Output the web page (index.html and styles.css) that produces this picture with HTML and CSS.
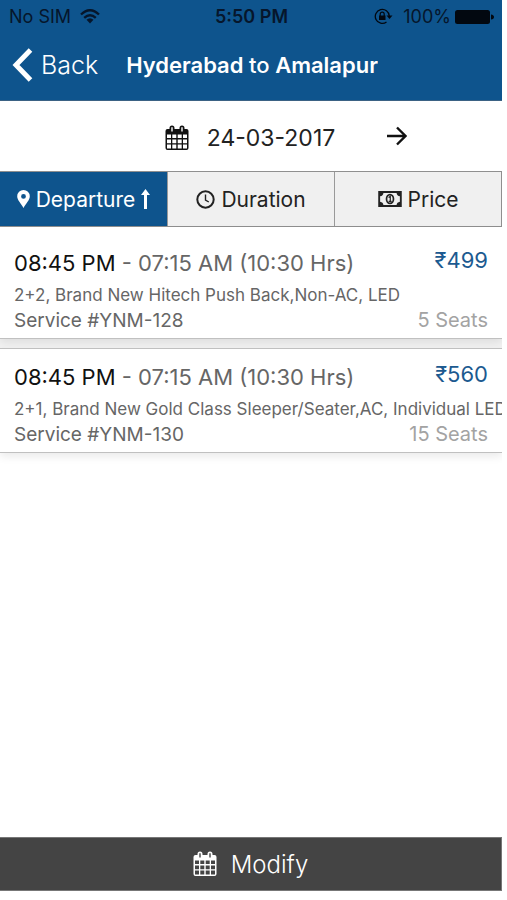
FILE: index.html
```html
<!DOCTYPE html>
<html lang="en">
<head>
<meta charset="utf-8">
<meta name="viewport" content="width=device-width, initial-scale=1">
<title>Hyderabad to Amalapuram</title>
<link rel="stylesheet" href="styles.css">
</head>
<body>
<svg class="defs" aria-hidden="true">
  <symbol id="calendar" viewBox="0 0 24 26">
    <path fill="currentColor" fill-rule="evenodd" d="M2.500 4H4.500V3Q4.500 0.500 7 0.500T9.500 3V4H14.500V3Q14.500 0.500 17 0.500T19.500 3V4H21.500Q23.500 4 23.500 6V23Q23.500 25 21.500 25H2.500Q0.500 25 0.500 23V6Q0.500 4 2.500 4ZM6.300 3V6.500H7.700V3Q7.700 2 7 2T6.300 3ZM16.300 3V6.500H17.700V3Q17.700 2 17 2T16.300 3ZM2 9.500V13H6V9.500ZM7.300 9.500V13H11.300V9.500ZM12.700 9.500V13H16.700V9.500ZM18 9.500V13H22V9.500ZM2 14.400V18.200H6V14.400ZM7.300 14.400V18.200H11.300V14.400ZM12.700 14.400V18.200H16.700V14.400ZM18 14.400V18.200H22V14.400ZM2 19.600V23.500H6V19.600ZM7.300 19.600V23.500H11.300V19.600ZM12.700 19.600V23.500H16.700V19.600ZM18 19.600V23.500H22V19.600Z"/>
  </symbol>
</svg>
<div class="app">
  <header class="top">
    <div class="status">
      <span class="carrier">No SIM
        <svg width="20" height="15" viewBox="0 0 20 15" fill="none" stroke="currentColor" stroke-width="2.400"><path d="M1 5.500Q10-3 19 5.500M4.200 8.800Q10 3.500 15.800 8.800"/><path d="M6.500 10.800Q10 7.800 13.500 10.800L10 14.500Z" fill="currentColor" stroke="none"/></svg>
      </span>
      <span class="clock">5:50 PM</span>
      <span class="battery">
        <svg width="19" height="17" viewBox="0 0 19 17"><path d="M12.500 14A7 7 0 1 1 15.300 8" fill="none" stroke="currentColor" stroke-width="1.300"/><path d="M12.500 7.500H18.500L15.500 11Z" fill="currentColor"/><path d="M5 7.500H11.500V12H5Z" fill="currentColor"/><path d="M6.200 8V6.200a2 2 0 0 1 4 0V8" fill="none" stroke="currentColor" stroke-width="1.200"/></svg>
        <span class="level">100%</span>
        <svg width="39" height="14" viewBox="0 0 39 14" fill="currentColor"><rect width="35" height="14" rx="2.500"/><path d="M36 4.500Q39 5 39 7T36 9.500Z"/></svg>
      </span>
    </div>
    <nav class="nav">
      <button class="back" type="button">
        <svg width="21" height="34" viewBox="0 0 21 34" fill="none" stroke="currentColor" stroke-width="5"><path d="M18.500 2L4 17L18.500 32"/></svg>
        Back
      </button>
      <h1 class="route">Hyderabad <span>to</span> Amalapuram</h1>
    </nav>
  </header>
  <main class="content">
    <div class="date">
      <button class="day" type="button"><svg width="24" height="26"><use href="#calendar"/></svg>24-03-2017</button>
      <button class="next" type="button" aria-label="Next day"><svg width="20" height="20" viewBox="0 0 20 20" fill="none" stroke="currentColor" stroke-width="2.400"><path d="M0 10H18M10 1.500L18.500 10L10 18.500"/></svg></button>
    </div>
    <div class="sort">
      <button class="tab active" type="button">
        <svg width="13" height="18" viewBox="0 0 13 18"><path fill="currentColor" fill-rule="evenodd" d="M6.500 0A6.300 6.300 0 0 1 12.800 6.300C12.800 10 9 13.500 6.500 18C4 13.500.2 10 .2 6.300A6.300 6.300 0 0 1 6.500 0ZM6.500 4A2.400 2.400 0 1 0 6.500 8.800A2.400 2.400 0 1 0 6.500 4Z"/></svg>
        <span>Departure</span>
        <svg width="9" height="20" viewBox="0 0 9 20"><path fill="currentColor" d="M4.500 0L9 6H6V20H3V6H0Z"/></svg>
      </button>
      <button class="tab" type="button">
        <svg width="19" height="19" viewBox="0 0 19 19" fill="none" stroke="currentColor"><circle cx="9.500" cy="9.500" r="8.200" stroke-width="2"/><path d="M9.500 4.500V10L12.800 12" stroke-width="1.400"/></svg>
        <span>Duration</span>
      </button>
      <button class="tab" type="button">
        <svg width="24" height="16" viewBox="0 0 25 17"><path fill="currentColor" fill-rule="evenodd" d="M0 0H25V17H0ZM5.500 2Q5.200 5 2 5.500V11.500Q5.200 12 5.500 15H19.500Q19.800 12 23 11.500V5.500Q19.800 5 19.500 2Z"/><ellipse cx="12.500" cy="8.500" rx="3.700" ry="4.700" fill="none" stroke="currentColor" stroke-width="1.800"/><path d="M11 7L12.800 5.800V11M11 11H14.300" fill="none" stroke="currentColor" stroke-width="1.300"/></svg>
        <span>Price</span>
      </button>
    </div>
    <section class="trips">
      <article class="trip">
        <div class="row"><p class="time"><b>08:45 PM</b> - 07:15 AM (10:30 Hrs)</p><p class="fare">₹499</p></div>
        <p class="coach">2+2, Brand New Hitech Push Back,Non-AC, LED</p>
        <div class="row"><p class="service">Service #YNM-128</p><p class="seats">5 Seats</p></div>
      </article>
      <article class="trip">
        <div class="row"><p class="time"><b>08:45 PM</b> - 07:15 AM (10:30 Hrs)</p><p class="fare">₹560</p></div>
        <p class="coach">2+1, Brand New Gold Class Sleeper/Seater,AC, Individual LED</p>
        <div class="row"><p class="service">Service #YNM-130</p><p class="seats">15 Seats</p></div>
      </article>
    </section>
  </main>
  <button class="modify" type="button"><svg width="24" height="26"><use href="#calendar"/></svg>Modify</button>
</div>
</body>
</html>
```
FILE: styles.css
```css
* {
  box-sizing: border-box;
}

body {
  margin: 0;
  padding: 0 5px 9px 0;
  background: #fff;
  color: #222;
  font-family: Inter, "Liberation Sans", sans-serif;
}

h1,
p {
  margin: 0;
}

button {
  margin: 0;
  padding: 0;
  border: 0;
  background: none;
  color: inherit;
  font: inherit;
}

svg {
  flex: none;
}

.defs {
  position: absolute;
  width: 0;
  height: 0;
}

.app {
  display: flex;
  flex-direction: column;
  min-height: calc(100vh - 9px);
  overflow: hidden;
}

.top {
  padding-bottom: 3px;
  border-bottom: 1px solid #3b6284;
  background: #0e548d;
}

.status {
  display: grid;
  grid-template-columns: 1fr auto 1fr;
  align-items: center;
  height: 33px;
  padding: 0 8px 0 9px;
  color: #06162b;
  font-size: 18px;
}

.carrier,
.battery {
  display: flex;
  align-items: center;
  gap: 9px;
}

.battery {
  justify-content: flex-end;
  gap: 4px;
}

.battery rect,
.battery path {
  color: #020810;
}

.level {
  margin-left: 6px;
}

.clock {
  font-weight: 600;
}

.nav {
  display: flex;
  align-items: center;
  gap: 28px;
  height: 64px;
  padding: 0 124px 0 12px;
  color: #fff;
}

.back {
  display: flex;
  align-items: center;
  gap: 8px;
  font-size: 25px;
  font-weight: 300;
}

.route {
  flex: 1;
  min-width: 0;
  overflow: hidden;
  font-size: 22px;
  font-weight: 600;
  white-space: nowrap;
}

.route span {
  font-weight: 500;
}

.content {
  flex: 1;
}

.date {
  display: flex;
  align-items: center;
  justify-content: center;
  gap: 52px;
  height: 70px;
  padding-left: 70px;
}

.day {
  display: flex;
  align-items: center;
  gap: 18px;
  padding-top: 4px;
  font-size: 23px;
}

.next,
.day svg {
  display: flex;
  color: #111;
}

.sort {
  display: grid;
  grid-template-columns: repeat(3, 1fr);
  height: 56px;
  border: 1px solid #8f8f8f;
  border-width: 1px 1px 1px 0;
  background: #f0f0f0;
}

.tab {
  display: flex;
  align-items: center;
  justify-content: center;
  gap: 6px;
  font-size: 21px;
}

.tab + .tab {
  border-left: 1px solid #999;
}

.tab.active {
  background: #0e548d;
  color: #fff;
}

.trips {
  display: grid;
  gap: 9px;
  background: #f2f2f2;
}

.trip {
  min-width: 0;
  padding: 10px 0 7px 14px;
  border: 1px solid #c0c0c0;
  border-width: 1px 0;
  background: #fff;
  box-shadow: 0 4px 8px rgb(0 0 0 / 8%);
  color: #666;
}

.trip:first-child {
  padding-top: 18px;
  border-top: 0;
}

.row {
  display: flex;
  justify-content: space-between;
  padding-right: 14px;
}

.time {
  font-size: 22px;
  line-height: 36px;
}

.time b {
  color: #111;
  font-weight: 400;
}

.fare {
  color: #1c5a90;
  font-size: 22px;
  line-height: 30px;
}

.coach {
  overflow: hidden;
  font-size: 17px;
  line-height: 29px;
  white-space: nowrap;
}

.service {
  font-size: 19px;
  line-height: 21px;
}

.seats {
  color: #a3a3a3;
  font-size: 20px;
  line-height: 21px;
}

.modify {
  display: flex;
  align-items: center;
  justify-content: center;
  gap: 14px;
  height: 54px;
  border: 1px solid #777;
  border-left: 0;
  background: #444;
  color: #fff;
  font-size: 24px;
  font-weight: 300;
}
```
